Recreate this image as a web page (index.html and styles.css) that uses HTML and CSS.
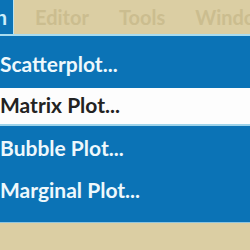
FILE: index.html
```html
<!DOCTYPE html>
<html lang="en">
<head>
  <meta charset="UTF-8" />
  <title>Graph menu</title>
  <link rel="stylesheet" href="styles.css">
</head>
<body>
  <div class="menubar">
    <div class="menu-tab open"><span>Graph</span></div>
    <div class="menu-strip">
      <span class="menu-tab">Editor</span>
      <span class="menu-tab">Tools</span>
      <span class="menu-tab">Window</span>
    </div>
  </div>

  <ul class="dropdown">
    <li class="item">Scatterplot...</li>
    <li class="item active">Matrix Plot...</li>
    <li class="item">Bubble Plot...</li>
    <li class="item">Marginal Plot...</li>
  </ul>

  <div class="below"></div>
</body>
</html>
```

FILE: styles.css
```css
* {
  box-sizing: border-box;
}

body {
  margin: 0;
  width: 250px;
  height: 250px;
  overflow: hidden;
  background: #0b73b6;
  font-family: Lato, 'Open Sans', sans-serif;
  font-weight: 700;
}

.menubar {
  display: flex;
  height: 36px;
  border-bottom: 2px solid #a9dcef;
}

.menu-tab.open {
  width: 14px;
  flex-shrink: 0;
  position: relative;
  overflow: hidden;
  border-right: 1px solid #b9e3f2;
  color: #cdeefa;
  font-size: 21px;
  line-height: 34px;
}

/* only the tail of the open tab's label peeks out */
.menu-tab.open span {
  position: absolute;
  right: 6px;
  top: 0;
  white-space: nowrap;
}

.menu-strip {
  flex: 1;
  display: flex;
  gap: 30px;
  padding-left: 21px;
  background: #dbcea3;
  white-space: nowrap;
  overflow: hidden;
}

.menu-strip .menu-tab {
  color: #cbbd8f;
  font-size: 20px;
  line-height: 34px;
}

.dropdown {
  list-style: none;
  margin: 0;
  padding: 8px 0 10px;
  border-bottom: 1px solid #8fc5df;
}

.item {
  height: 42px;
  color: #eef8fc;
  font-size: 21px;
  line-height: 40px;
  white-space: nowrap;
}

.item.active {
  height: 38px;
  margin-top: 2px;
  margin-bottom: 2px;
  background: #fdfdfd;
  border-bottom: 2px solid #9dd3ea;
  color: #222;
  line-height: 34px;
}

.below {
  height: 27px;
  background: #dbcea3;
}
```
